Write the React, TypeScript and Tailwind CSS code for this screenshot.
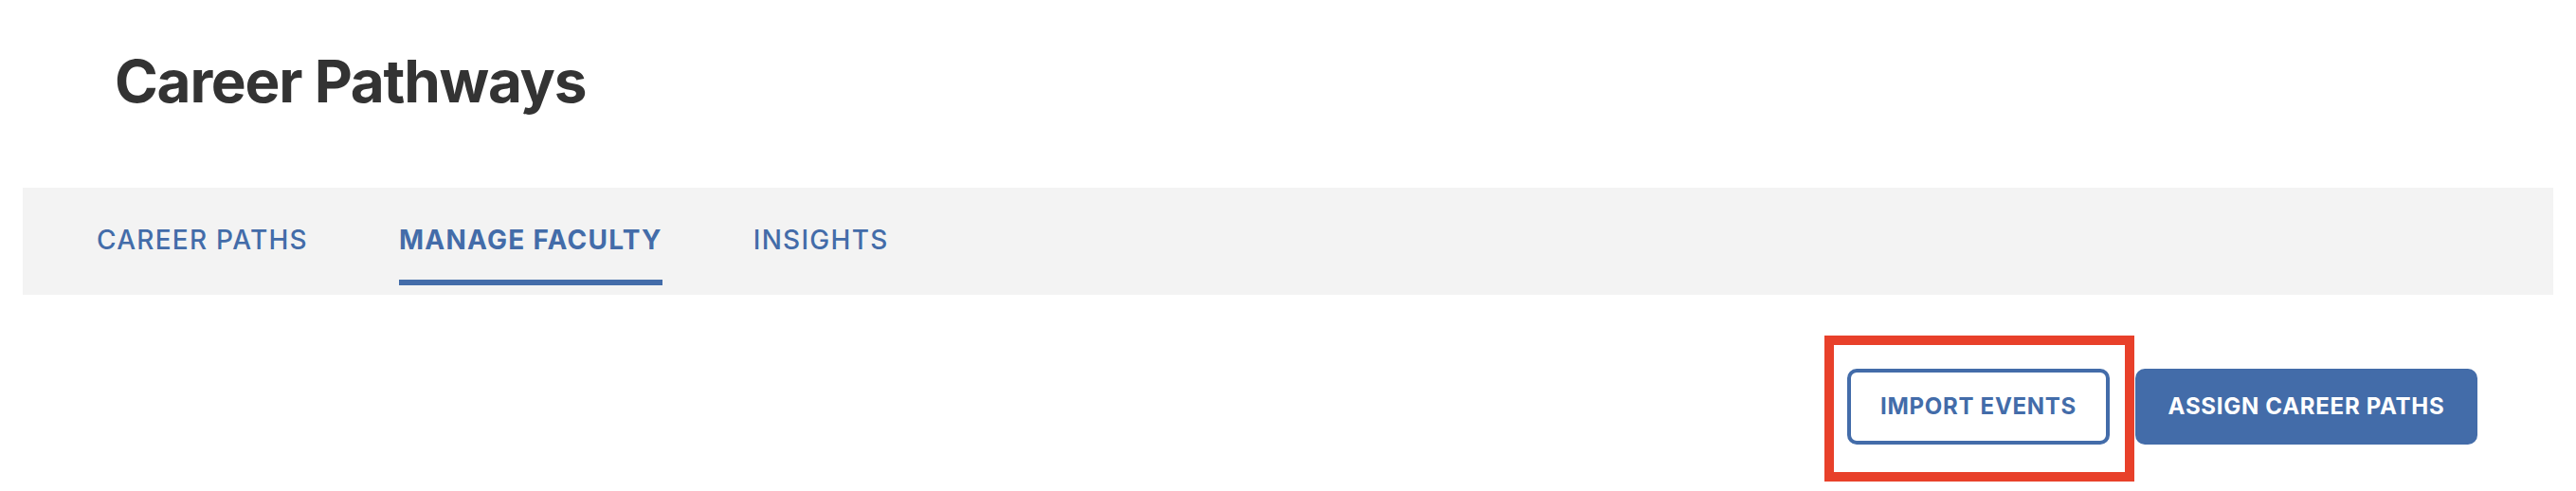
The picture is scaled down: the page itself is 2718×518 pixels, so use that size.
import React from "react";

const tabs = [
  { label: "CAREER PATHS", active: false },
  { label: "MANAGE FACULTY", active: true },
  { label: "INSIGHTS", active: false },
];

export default function App() {
  return (
    <div className="w-full bg-white font-['Inter','Liberation_Sans',sans-serif]">
      <header className="pl-[121px] pt-[55px] pb-[81px]">
        <h1 className="text-[62px] leading-[62px] font-bold text-[#333333] tracking-[-0.02em]">
          Career Pathways
        </h1>
      </header>

      <nav className="mx-6 h-[113px] bg-[#f3f3f3] flex gap-[96px] pl-[78px]">
        {tabs.map((t) => (
          <div key={t.label} className="flex flex-col items-stretch pt-[41px]">
            <span
              className={
                "text-[28px] leading-[28px] tracking-[0.045em] text-[#436ca9] " +
                (t.active ? "font-bold" : "font-medium")
              }
            >
              {t.label}
            </span>
            {t.active && <span className="mt-[28px] h-[6px] bg-[#436ca9]" />}
          </div>
        ))}
      </nav>

      <div className="flex justify-end gap-[27px] pt-[78px] pr-[104px] pb-[49px]">
        <div className="relative">
          <button className="w-[277px] h-[80px] flex items-center justify-center rounded-[10px] border-4 border-[#436ca9] bg-white text-[24px] font-bold tracking-[0.03em] text-[#436ca9]">
            IMPORT EVENTS
          </button>
          <div className="pointer-events-none absolute -left-[24px] -top-[35px] -right-[26px] -bottom-[39px] border-[10px] border-[#e8402a]" />
        </div>
        <button className="w-[361px] h-[80px] flex items-center justify-center rounded-[10px] bg-[#436ca9] text-[24px] font-bold tracking-[0.03em] text-white">
          ASSIGN CAREER PATHS
        </button>
      </div>
    </div>
  );
}
